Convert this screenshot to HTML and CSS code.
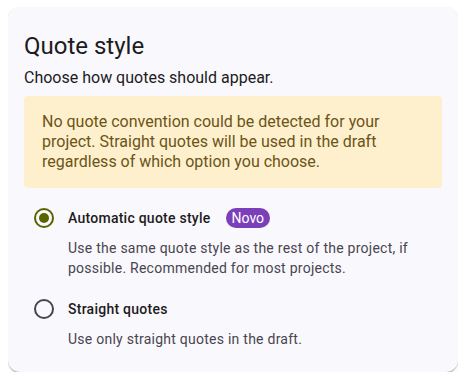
FILE: index.html
```html
<!DOCTYPE html>
<html lang="en">
<head>
    <meta charset="UTF-8">
    <meta name="viewport" content="width=device-width, initial-scale=1.0">
    <title>Quote style</title>
    <link rel="stylesheet" href="styles.css">
</head>
<body>
    <div class="card">
        <h2 class="title">Quote style</h2>
        <p class="subtitle">Choose how quotes should appear.</p>

        <div class="warning">
            No quote convention could be detected for your project. Straight quotes will be used in the draft regardless of which option you choose.
        </div>

        <div class="options">
            <div class="option">
                <label class="option-row">
                    <span class="radio-target">
                        <input type="radio" name="quoteStyle" value="auto" checked>
                        <span class="radio"></span>
                    </span>
                    <span class="option-label">Automatic quote style</span>
                    <span class="badge">Novo</span>
                </label>
                <p class="option-desc">Use the same quote style as the rest of the project, if possible. Recommended for most projects.</p>
            </div>

            <div class="option">
                <label class="option-row">
                    <span class="radio-target">
                        <input type="radio" name="quoteStyle" value="straight">
                        <span class="radio"></span>
                    </span>
                    <span class="option-label">Straight quotes</span>
                </label>
                <p class="option-desc">Use only straight quotes in the draft.</p>
            </div>
        </div>
    </div>
</body>
</html>
```

FILE: styles.css
```css
* {
    margin: 0;
    padding: 0;
    box-sizing: border-box;
}

body {
    font-family: Roboto, "Noto Sans", Arial, sans-serif;
    background-color: #ffffff;
    color: #1d1b20;
    margin: 7px 8px 8px;
}

.card {
    background: #f9f8fd;
    border-radius: 12px;
    box-shadow: 0 2px 1px -1px rgba(0,0,0,0.2), 0 1px 1px 0 rgba(0,0,0,0.14), 0 1px 3px 0 rgba(0,0,0,0.12);
    padding: 23px 16px 16px;
    height: 365px;
}

.title {
    font-size: 24px;
    font-weight: 400;
    line-height: 32px;
}

.subtitle {
    font-size: 16px;
    line-height: 24px;
    margin-top: 4px;
}

.warning {
    margin-top: 6px;
    background: #fef0cd;
    color: #6b5418;
    border-radius: 4px;
    padding: 16px 18px;
    font-size: 16px;
    line-height: 20px;
}

.options {
    margin-top: 10px;
    display: flex;
    flex-direction: column;
    gap: 11px;
}

.option-row {
    display: flex;
    align-items: center;
    height: 40px;
    cursor: pointer;
}

.radio-target {
    position: relative;
    width: 40px;
    height: 40px;
    display: flex;
    align-items: center;
    justify-content: center;
    flex-shrink: 0;
}

.radio-target input {
    position: absolute;
    opacity: 0;
    width: 100%;
    height: 100%;
    margin: 0;
    cursor: pointer;
}

.radio {
    width: 20px;
    height: 20px;
    border: 2px solid #49454f;
    border-radius: 50%;
    display: flex;
    align-items: center;
    justify-content: center;
}

.radio-target input:checked + .radio {
    border-color: #5b6300;
}

.radio-target input:checked + .radio::after {
    content: "";
    width: 10px;
    height: 10px;
    border-radius: 50%;
    background: #5b6300;
}

.option-label {
    margin-left: 4px;
    font-size: 14px;
    font-weight: 500;
    line-height: 20px;
    letter-spacing: 0.25px;
    color: #1d1b20;
}

.badge {
    margin-left: 15px;
    background: #7b3fb9;
    color: #ffffff;
    font-size: 14px;
    line-height: 20px;
    padding: 0 6px;
    border-radius: 10px;
}

.option-desc {
    margin-left: 44px;
    font-size: 14px;
    line-height: 20px;
    letter-spacing: 0.25px;
    color: #49454f;
}
```
